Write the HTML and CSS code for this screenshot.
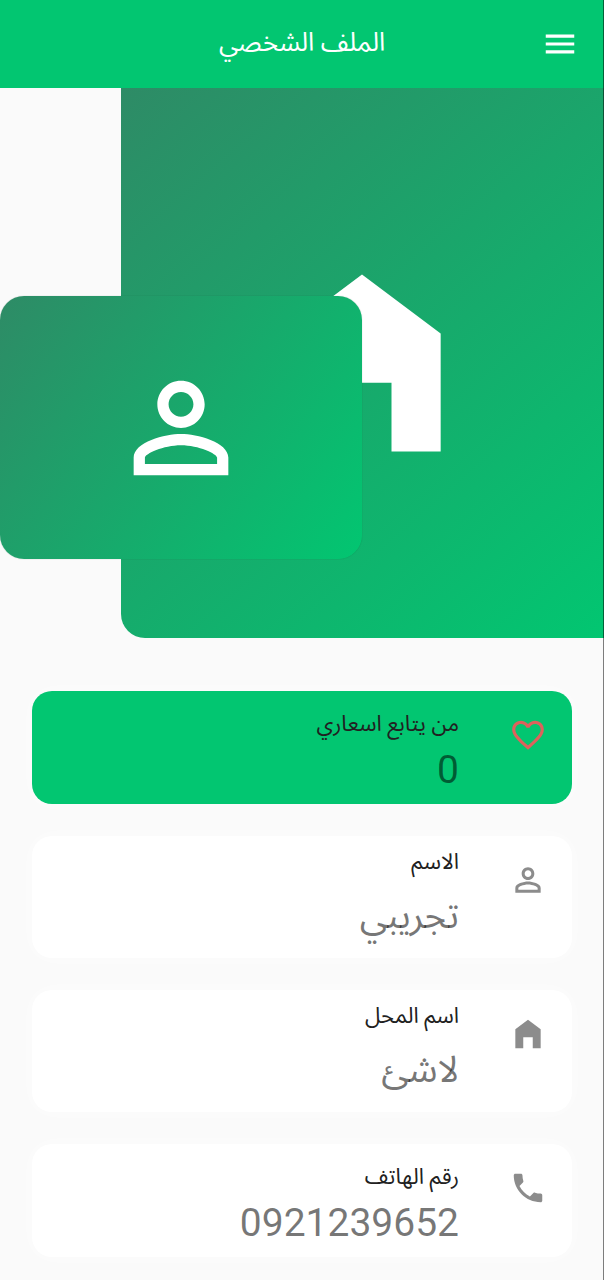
FILE: index.html
```html
<!DOCTYPE html>
<html lang="ar" dir="rtl">
<head>
<meta charset="utf-8">
<meta name="viewport" content="width=device-width, initial-scale=1">
<title>الملف الشخصي</title>
<link rel="stylesheet" href="styles.css">
</head>
<body>
<header class="app-bar">
  <button class="menu-button" type="button" aria-label="القائمة">
    <svg class="icon" viewBox="0 0 24 24" aria-hidden="true"><path d="M3 18h18v-2H3v2zm0-5h18v-2H3v2zm0-7v2h18V6H3z"/></svg>
  </button>
  <h1 class="app-title">الملف الشخصي</h1>
</header>
<main>
  <section class="hero">
    <div class="cover">
      <svg class="cover-icon" viewBox="0 0 24 24" aria-hidden="true"><path d="M12 3L4 9v12h5v-7h6v7h5V9z"/></svg>
    </div>
    <div class="avatar">
      <svg class="avatar-icon" viewBox="0 0 24 24" aria-hidden="true"><path d="M12 5.9c1.16 0 2.1.94 2.1 2.1s-.94 2.1-2.1 2.1S9.9 9.16 9.9 8s.94-2.1 2.1-2.1m0 9c2.97 0 6.1 1.46 6.1 2.1v1.1H5.9V17c0-.64 3.13-2.1 6.1-2.1M12 4C9.79 4 8 5.79 8 8s1.79 4 4 4 4-1.79 4-4-1.79-4-4-4zm0 9c-2.67 0-8 1.34-8 4v3h16v-3c0-2.66-5.33-4-8-4z"/></svg>
    </div>
  </section>
  <ul class="details">
    <li class="card card-accent">
      <svg class="icon" viewBox="0 0 24 24" aria-hidden="true"><path d="M16.5 3c-1.74 0-3.41.81-4.5 2.09C10.91 3.81 9.24 3 7.5 3 4.42 3 2 5.42 2 8.5c0 3.78 3.4 6.86 8.55 11.54L12 21.35l1.45-1.32C18.6 15.36 22 12.28 22 8.5 22 5.42 19.58 3 16.5 3zm-4.4 15.55l-.1.1-.1-.1C7.14 14.24 4 11.39 4 8.5 4 6.5 5.5 5 7.5 5c1.54 0 3.04.99 3.57 2.36h1.87C13.46 5.99 14.96 5 16.5 5c2 0 3.5 1.5 3.5 3.5 0 2.89-3.14 5.74-7.9 10.05z"/></svg>
      <div class="card-text">
        <h2 class="label">من يتابع اسعاري</h2>
        <p class="value">0</p>
      </div>
    </li>
    <li class="card card-tall">
      <svg class="icon" viewBox="0 0 24 24" aria-hidden="true"><path d="M12 5.9c1.16 0 2.1.94 2.1 2.1s-.94 2.1-2.1 2.1S9.9 9.16 9.9 8s.94-2.1 2.1-2.1m0 9c2.97 0 6.1 1.46 6.1 2.1v1.1H5.9V17c0-.64 3.13-2.1 6.1-2.1M12 4C9.79 4 8 5.79 8 8s1.79 4 4 4 4-1.79 4-4-1.79-4-4-4zm0 9c-2.67 0-8 1.34-8 4v3h16v-3c0-2.66-5.33-4-8-4z"/></svg>
      <div class="card-text">
        <h2 class="label">الاسم</h2>
        <p class="value">تجريبي</p>
      </div>
    </li>
    <li class="card card-tall">
      <svg class="icon" viewBox="0 0 24 24" aria-hidden="true"><path d="M12 3L4 9v12h5v-7h6v7h5V9z"/></svg>
      <div class="card-text">
        <h2 class="label">اسم المحل</h2>
        <p class="value">لاشئ</p>
      </div>
    </li>
    <li class="card">
      <svg class="icon" viewBox="0 0 24 24" aria-hidden="true"><path d="M6.62 10.79c1.44 2.83 3.76 5.14 6.59 6.59l2.2-2.2c.27-.27.67-.36 1.02-.24 1.12.37 2.33.57 3.57.57.55 0 1 .45 1 1V20c0 .55-.45 1-1 1-9.39 0-17-7.61-17-17 0-.55.45-1 1-1h3.5c.55 0 1 .45 1 1 0 1.25.2 2.45.57 3.57.11.35.03.74-.25 1.02l-2.2 2.2z"/></svg>
      <div class="card-text">
        <h2 class="label">رقم الهاتف</h2>
        <p class="value">0921239652</p>
      </div>
    </li>
  </ul>
</main>
</body>
</html>
```
FILE: styles.css
```css
* {
  box-sizing: border-box;
}

body {
  margin: 0;
  background: #fafafa;
  color: #212121;
  font-family: Roboto, "Noto Sans Arabic", "Noto Naskh Arabic", "Noto Sans", "DejaVu Sans", sans-serif;
}

/* thin edge line over the whole window */
body::after {
  content: "";
  position: fixed;
  top: 0;
  right: 0;
  bottom: 0;
  width: 1px;
  background: rgba(0, 0, 0, 0.5);
}

h1,
h2,
p,
ul {
  margin: 0;
  padding: 0;
  font-weight: 400;
}

.icon {
  display: block;
  flex: none;
  width: 38px;
  height: 38px;
  fill: currentColor;
}

.app-bar {
  display: grid;
  grid-template-columns: 38px 1fr 38px;
  align-items: center;
  height: 88px;
  padding: 0 25px;
  background: #02c671;
  color: #fff;
}

.menu-button {
  padding: 0;
  border: 0;
  background: none;
  color: inherit;
}

.app-title {
  padding-bottom: 4px;
  font-size: 26px;
  line-height: 40px;
  text-align: center;
}

.hero {
  display: grid;
  grid-template-columns: 4fr 8fr 8fr;
  grid-template-rows: 208px 263px 79px;
  direction: ltr;
}

.cover,
.avatar {
  display: grid;
  place-items: center;
  fill: #fff;
}

.cover {
  grid-area: 1 / 2 / 4 / 4;
  border-bottom-left-radius: 24px;
  background: linear-gradient(139deg, #2e8b66, #02c671);
}

.avatar {
  grid-area: 2 / 1 / 3 / 3;
  border-radius: 24px;
  background: linear-gradient(126deg, #2e8b66, #02c671);
  box-shadow: 0 0 1px rgba(0, 60, 30, 0.4);
}

.cover-icon {
  width: 236px;
  height: 236px;
}

.avatar-icon {
  width: 142px;
  height: 142px;
}

.details {
  display: grid;
  gap: 32px;
  padding: 53px 32px 16px;
  list-style: none;
}

.card {
  display: flex;
  gap: 50px;
  padding: 16px 25px 4px;
  border-radius: 20px;
  background: #fff;
  box-shadow: 0 0 20px rgba(255, 255, 255, 0.6);
}

.card .icon {
  margin-top: 9px;
  color: #8c8c8c;
}

.card-accent {
  background: #02c671;
}

.card-accent .icon {
  color: #dc625c;
}

.label {
  font-size: 22px;
  line-height: 34px;
}

.value {
  color: rgba(0, 0, 0, 0.54);
  font-size: 39px;
  line-height: 59px;
}

/* cards whose value is an Arabic word */
.card-tall {
  padding-top: 9px;
  padding-bottom: 6px;
}

.card-tall .icon {
  margin-top: 16px;
}

.card-tall .value {
  font-size: 37px;
  line-height: 73px;
}
```
